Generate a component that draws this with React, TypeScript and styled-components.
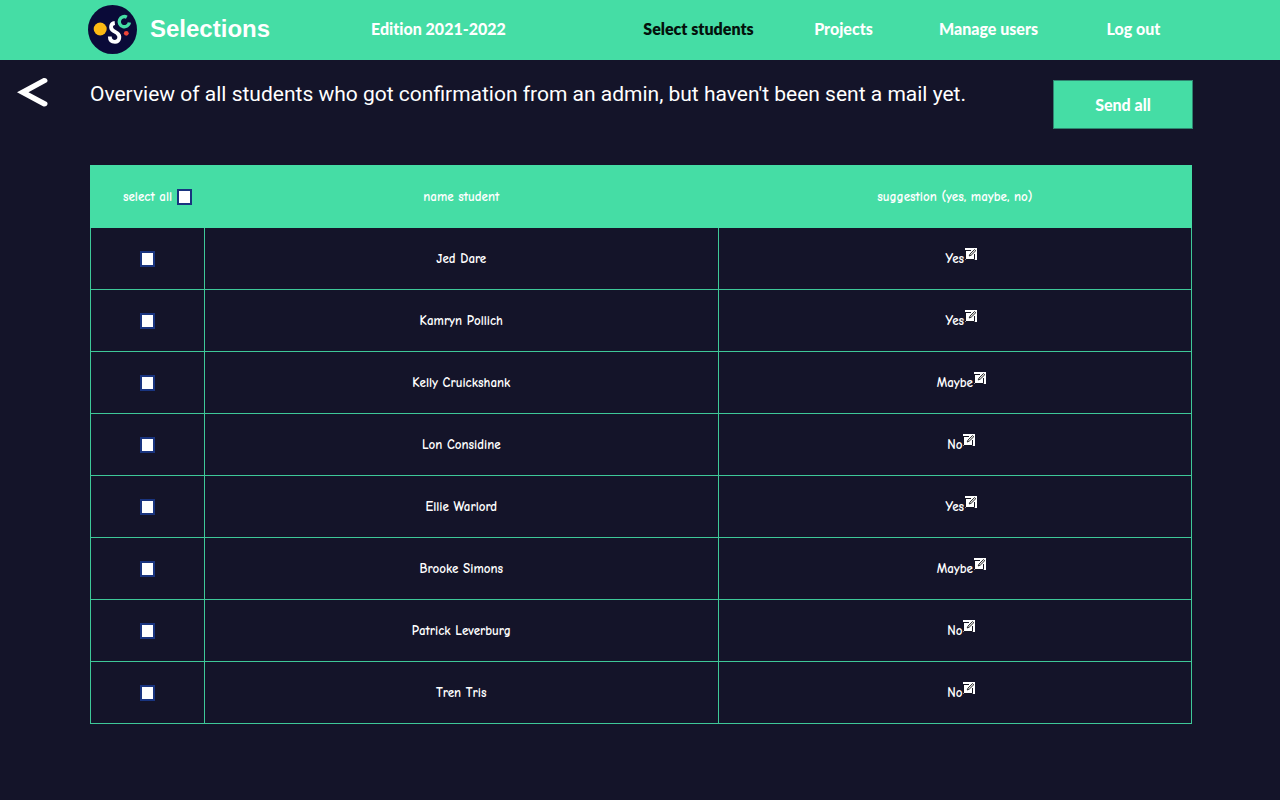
import React, { useState } from 'react';
import styled, { createGlobalStyle } from 'styled-components';

const colors = {
  green: '#45dda5',
  line: '#3ec898',
  edge: '#2f8570',
  night: '#141429',
  logo: '#0a0a38',
  navy: '#19347f',
};

const GlobalStyle = createGlobalStyle`
  *, *::before, *::after { box-sizing: border-box; }
  body {
    margin: 0;
    background: ${colors.night};
    color: #fff;
    font-family: Lato, sans-serif;
    font-variant-ligatures: none;
  }
`;

const Header = styled.header`
  display: flex;
  align-items: center;
  height: 60px;
  padding: 0 74px 2px 88px;
  background: ${colors.green};
`;

const Brand = styled.a`
  display: flex;
  align-items: center;
  gap: 13px;
  color: #fff;
  font: bold 24px/28px "Liberation Sans", Arial, sans-serif;
  text-decoration: none;

  svg { display: block; width: 49px; height: 49px; }
`;

const Edition = styled.span`
  margin-left: 101px;
  font-size: 16px;
  font-weight: 900;
  line-height: 20px;
  white-space: nowrap;
`;

const Nav = styled.nav`
  display: grid;
  grid-template-columns: repeat(4, 145px);
  margin-left: auto;
`;

const NavLink = styled.a<{ $active?: boolean }>`
  color: ${({ $active }) => ($active ? '#04120c' : '#fff')};
  font-size: 16px;
  font-weight: ${({ $active }) => ($active ? 800 : 900)};
  line-height: 20px;
  text-align: center;
  text-decoration: none;
`;

const Main = styled.main`
  padding: 20px 87px 76px 17px;
`;

const Intro = styled.section`
  display: grid;
  grid-template-columns: 73px 1fr 140px;
  align-items: start;
`;

const BackButton = styled.button`
  width: 32px;
  height: 30px;
  margin-top: -3px;
  padding: 0;
  border: 0;
  background: none;
  cursor: pointer;

  svg { display: block; }
`;

const Title = styled.h1`
  margin: 0;
  font: 400 21px/28px Roboto, sans-serif;
`;

const SendButton = styled.button`
  height: 49px;
  border: 1px solid ${colors.edge};
  background: ${colors.green};
  color: #fff;
  font: 900 16px/20px Lato, sans-serif;
  cursor: pointer;
`;

const Table = styled.table`
  width: calc(100% - 74px);
  margin: 36px 0 0 73px;
  border-collapse: collapse;
  table-layout: fixed;
  font: 700 13px/16px "Comic Neue", "Comic Sans MS", Lato, sans-serif;
  text-align: center;
`;

const SelectColumn = styled.col`width: 114px;`;
const SuggestionColumn = styled.col`width: 43%;`;

const HeadCell = styled.th<{ $first?: boolean }>`
  height: 62px;
  padding: 0 0 0 ${({ $first }) => ($first ? '20px' : '0')};
  border: 1px solid ${colors.green};
  background: ${colors.green};
  font-weight: 700;
`;

const Cell = styled.td`
  height: 62px;
  padding: 0;
  border: 1px solid ${colors.line};
`;

const SelectAll = styled.label`
  display: flex;
  align-items: center;
  justify-content: center;
  gap: 5px;
`;

const Checkbox = styled.input.attrs({ type: 'checkbox' })`
  appearance: none;
  display: block;
  width: 15px;
  height: 16px;
  margin: 0 auto;
  border: 2px solid ${colors.navy};
  background: #fff;
  cursor: pointer;

  ${SelectAll} & { margin: 0; }
  &:checked { background: ${colors.navy}; box-shadow: inset 0 0 0 2px #fff; }
`;

const Suggestion = styled.span`
  position: relative;
  display: inline-block;
`;

const EditButton = styled.button`
  position: absolute;
  top: -3px;
  left: 100%;
  width: 13px;
  height: 13px;
  padding: 0;
  border: 0;
  background: none;
  cursor: pointer;

  svg { display: block; }
`;

const students = [
  { name: 'Jed Dare', suggestion: 'Yes' },
  { name: 'Kamryn Pollich', suggestion: 'Yes' },
  { name: 'Kelly Cruickshank', suggestion: 'Maybe' },
  { name: 'Lon Considine', suggestion: 'No' },
  { name: 'Ellie Warlord', suggestion: 'Yes' },
  { name: 'Brooke Simons', suggestion: 'Maybe' },
  { name: 'Patrick Leverburg', suggestion: 'No' },
  { name: 'Tren Tris', suggestion: 'No' },
];

const Logo = () => (
  <svg viewBox="0 0 49 49" aria-hidden="true">
    <circle cx="24.5" cy="24.5" r="24.5" fill={colors.logo} />
    <circle cx="12.2" cy="24" r="6.5" fill="#fdb913" />
    <path d="M26.8 18C22.4 18.5 21.8 23.5 25.5 25.8L29 28C33 31 31.5 36.8 27 36.8C23.6 36.8 21.8 34.8 21.8 31.5" fill="none" stroke="#fff" strokeWidth="3.8" />
    <path d="M38.8 12.2A5.1 5.1 0 1 0 41.4 17.4" fill="none" stroke={colors.green} strokeWidth="3.4" />
    <circle cx="38.3" cy="28.3" r="2.4" fill="#ef4438" />
  </svg>
);

const BackIcon = () => (
  <svg width="32" height="30" viewBox="0 0 32 30" aria-hidden="true">
    <path d="M0 15.2L26 1.2C29 0 32 3.2 29.8 5.3L11.5 15.2L29.8 25.1C32 27.2 29 30.4 26 29.2Z" fill="#fff" />
  </svg>
);

const EditIcon = () => (
  <svg width="13" height="13" viewBox="0 0 13 13" aria-hidden="true">
    <path d="M1 0H13V12H1Z" fill="#fff" />
    <path d="M1 2.5H7M1.5 2V11.5M2 11.5H10.5V6" fill="none" stroke="#141420" />
    <path d="M5.2 8L6 6L10.5 1.5L11.8 2.7L7.2 7.2Z" fill="#ddd" stroke="#222" strokeWidth="0.9" />
  </svg>
);

export default function App() {
  const [selected, setSelected] = useState<string[]>([]);
  const allSelected = selected.length === students.length;

  const toggle = (name: string) =>
    setSelected((current) =>
      current.includes(name) ? current.filter((item) => item !== name) : [...current, name],
    );

  return (
    <>
      <GlobalStyle />
      <Header>
        <Brand href="#home"><Logo />Selections</Brand>
        <Edition>Edition 2021-2022</Edition>
        <Nav>
          <NavLink href="#students" $active>Select students</NavLink>
          <NavLink href="#projects">Projects</NavLink>
          <NavLink href="#users">Manage users</NavLink>
          <NavLink href="#logout">Log out</NavLink>
        </Nav>
      </Header>
      <Main>
        <Intro>
          <BackButton aria-label="Back"><BackIcon /></BackButton>
          <Title>Overview of all students who got confirmation from an admin, but haven't been sent a mail yet.</Title>
          <SendButton>Send all</SendButton>
        </Intro>
        <Table>
          <colgroup>
            <SelectColumn />
            <col />
            <SuggestionColumn />
          </colgroup>
          <thead>
            <tr>
              <HeadCell $first>
                <SelectAll>
                  select all
                  <Checkbox
                    checked={allSelected}
                    onChange={() => setSelected(allSelected ? [] : students.map(({ name }) => name))}
                  />
                </SelectAll>
              </HeadCell>
              <HeadCell>name student</HeadCell>
              <HeadCell>suggestion (yes, maybe, no)</HeadCell>
            </tr>
          </thead>
          <tbody>
            {students.map(({ name, suggestion }) => (
              <tr key={name}>
                <Cell>
                  <Checkbox
                    aria-label={`Select ${name}`}
                    checked={selected.includes(name)}
                    onChange={() => toggle(name)}
                  />
                </Cell>
                <Cell>{name}</Cell>
                <Cell>
                  <Suggestion>
                    {suggestion}
                    <EditButton aria-label={`Edit suggestion for ${name}`}><EditIcon /></EditButton>
                  </Suggestion>
                </Cell>
              </tr>
            ))}
          </tbody>
        </Table>
      </Main>
    </>
  );
}
